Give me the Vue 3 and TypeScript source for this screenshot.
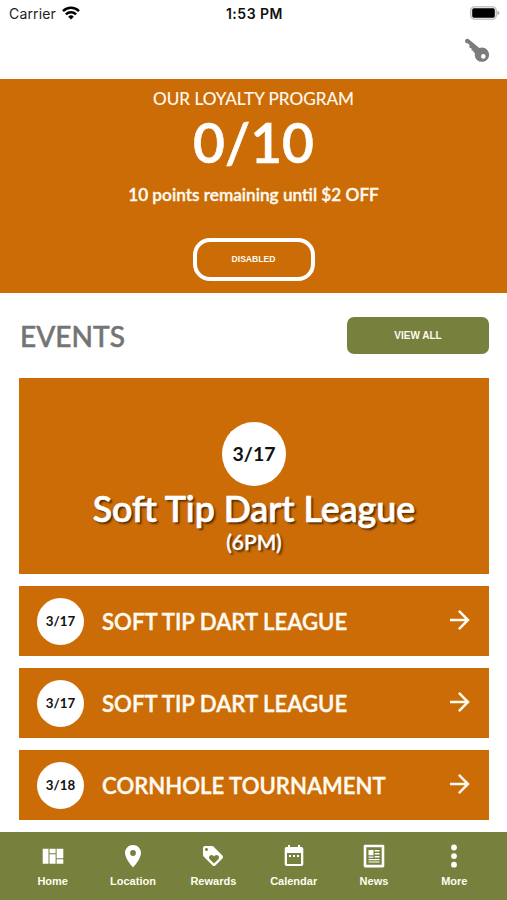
<script setup lang="ts">
interface EventItem {
  date: string
  title: string
}

interface Tab {
  label: string
  icon: string
}

const events: EventItem[] = [
  { date: '3/17', title: 'SOFT TIP DART LEAGUE' },
  { date: '3/17', title: 'SOFT TIP DART LEAGUE' },
  { date: '3/18', title: 'CORNHOLE TOURNAMENT' },
]

const tabs: Tab[] = [
  { label: 'Home', icon: 'M1.7 4.7h5.8v15H1.7zM8.5 4.7h6.1v4.6H8.5zM8.5 10.3h6.1v9.4H8.5zM15.6 4.7h6.7v9.6h-6.7zM15.6 15.3h6.7v4.4h-6.7z' },
  { label: 'Location', icon: 'M12 1C7.6 1 4 4.5 4 9c0 6 8 14.4 8 14.4s8-8.4 8-14.4c0-4.5-3.6-8-8-8zm0 10.9a2.9 2.9 0 0 1 0-5.8 2.9 2.9 0 0 1 0 5.8z' },
  { label: 'Rewards', icon: 'M21.41 11.58l-9-9C12.05 2.22 11.55 2 11 2H4c-1.1 0-2 .9-2 2v7c0 .55.22 1.05.59 1.42l9 9c.36.36.86.58 1.41.58.55 0 1.05-.22 1.41-.59l7-7c.37-.36.59-.86.59-1.41 0-.55-.23-1.06-.59-1.42zM5.5 7C4.67 7 4 6.33 4 5.5S4.67 4 5.5 4 7 4.67 7 5.5 6.33 7 5.5 7zm11.77 8.27L13 19.54l-4.27-4.27C8.28 14.81 8 14.19 8 13.5c0-1.38 1.12-2.5 2.5-2.5.69 0 1.32.28 1.77.74l.73.72.73-.73c.45-.45 1.08-.73 1.77-.73 1.38 0 2.5 1.12 2.5 2.5 0 .69-.28 1.32-.73 1.77z' },
  { label: 'Calendar', icon: 'M9 11H7v2h2v-2zm4 0h-2v2h2v-2zm4 0h-2v2h2v-2zm2.5-8H18V1h-2v2H8V1H6v2H4.5c-1.1 0-1.8.9-1.8 2v15c0 1.1.8 2 1.8 2h15c1 0 1.8-.9 1.8-2V5c0-1.1-.8-2-1.8-2zm-.5 17H5V9h14v11z' },
  { label: 'News', icon: 'M3.1.7h17.8a1.4 1.4 0 0 1 1.4 1.4V22a1.4 1.4 0 0 1-1.4 1.4H3.1A1.4 1.4 0 0 1 1.7 22V2.1A1.4 1.4 0 0 1 3.1.7zM4.3 3.3v17.5h15.4V3.3zM6.5 6h5v5.2h-5zM12.7 6h4.8v1.5h-4.8zM12.7 9h4.8v1.5h-4.8zM6.5 12.5h5v1.3h-5zM12.7 12h4.8v1.5h-4.8zM6.5 15h11v1.2h-11zM6.5 17.4h11v1.2h-11z' },
  { label: 'More', icon: 'M12 .6a2.9 2.9 0 1 1 0 5.8 2.9 2.9 0 0 1 0-5.8zm0 8.6a2.9 2.9 0 1 1 0 5.8 2.9 2.9 0 0 1 0-5.8zm0 8.6a2.9 2.9 0 1 1 0 5.8 2.9 2.9 0 0 1 0-5.8z' },
]
</script>

<template>
  <div class="screen">
    <header class="status">
      <div class="carrier">
        <span>Carrier</span>
        <svg class="wifi" viewBox="0 0 18 14" fill="none" stroke="#000" stroke-width="2.5">
          <path d="M1 5.1a11.5 11.5 0 0 1 16 0M3.9 8.3a7.3 7.3 0 0 1 10.2 0" />
          <path d="M9 13.5L6.2 10.7a4 4 0 0 1 5.6 0z" fill="#000" stroke="none" />
        </svg>
      </div>
      <strong class="clock">1:53 PM</strong>
      <svg class="battery" viewBox="0 0 30 14">
        <rect x=".7" y=".7" width="25.6" height="12.6" rx="3.7" fill="#eee" stroke="#b5b5b5" stroke-width="1.1" />
        <rect x="2.2" y="2.2" width="22.6" height="9.6" rx="1.7" />
        <path d="M27.4 4.8c2.7.9 2.7 3.5 0 4.4z" fill="#aaa" />
      </svg>
    </header>
    <div class="toolbar">
      <svg class="key" viewBox="0 0 26 26">
        <path fill-rule="evenodd" fill="#7c7c7c" d="M1 2.6C1.3 1 3.4.2 4.7 1.3L15.4 9.9A7.2 7.2 0 1 1 10.7 16.9L11 14.9 9.6 14.6 9.3 12.7 7.6 12.4 7.5 10.3 5.5 9.7 5.4 6.8 3.4 5.3 1.5 4.9zM19.3 16.1a2.3 2.3 0 1 0 0 4.6 2.3 2.3 0 0 0 0-4.6z" />
      </svg>
    </div>

    <section class="loyalty">
      <div class="program">OUR LOYALTY PROGRAM</div>
      <div class="score">0/10</div>
      <div class="remaining">10 points remaining until $2 OFF</div>
      <button class="disabled">DISABLED</button>
    </section>

    <main class="events">
      <div class="heading">
        <h2>EVENTS</h2>
        <button class="view-all">VIEW ALL</button>
      </div>
      <article class="feature">
        <div class="badge large">3/17</div>
        <h1>Soft Tip Dart League</h1>
        <div class="time">(6PM)</div>
      </article>
      <article v-for="(event, i) in events" :key="i" class="row">
        <div class="badge">{{ event.date }}</div>
        <div class="title">{{ event.title }}</div>
        <svg class="arrow" viewBox="0 0 20 20" fill="none" stroke="#fffaf0" stroke-width="2.5">
          <path d="M0 10h18M8.9 .9L18 10l-9.1 9.1" />
        </svg>
      </article>
    </main>

    <nav class="tabs">
      <div v-for="tab in tabs" :key="tab.label" class="tab">
        <svg viewBox="0 0 24 24"><path :d="tab.icon" fill="#fff" fill-rule="evenodd" /></svg>
        <span>{{ tab.label }}</span>
      </div>
    </nav>
  </div>
</template>

<style>
body { margin: 0; background: #fff; }
</style>

<style scoped>
* { box-sizing: border-box; }
.screen { width: 507px; height: 900px; display: flex; flex-direction: column; overflow: hidden; background: #fff; font-family: Lato, sans-serif; }
button { font-family: "Liberation Sans", Arial, sans-serif; font-weight: 700; color: #fffaf0; padding: 0; }
.status { height: 28px; flex: none; display: grid; grid-template-columns: 1fr auto 1fr; align-items: center; padding: 0 7px 2px 9px; font-family: Inter, sans-serif; font-size: 14px; color: #222; }
.carrier { display: flex; align-items: center; gap: 6px; letter-spacing: .15px; }
.wifi { width: 18px; height: 14px; margin-top: -1px; }
.clock { font-weight: 600; letter-spacing: .5px; color: #111; }
.battery { width: 30px; height: 14px; justify-self: end; }
.toolbar { height: 51px; flex: none; display: flex; justify-content: flex-end; padding: 10px 17px 0 0; }
.key { width: 26px; height: 26px; }
.loyalty { height: 214px; flex: none; display: flex; flex-direction: column; align-items: center; background: #cb6c07; color: #fffaf0; }
.program { margin-top: 9px; font-size: 17.15px; line-height: 22px; -webkit-text-stroke: .15px currentColor; }
.score { font-size: 55px; line-height: 66px; margin-top: -1px; font-weight: 600; color: #fff; -webkit-text-stroke: .6px currentColor; }
.remaining { margin-top: 7px; font-size: 17.2px; line-height: 26px; font-weight: 600; -webkit-text-stroke: .35px currentColor; }
.disabled { width: 122px; height: 43px; margin-top: 30px; border: 4px solid #fff; border-radius: 17px; background: transparent; font-size: 8.6px; padding-bottom: 2px; }
.events { flex: 1; display: flex; flex-direction: column; gap: 12px; padding: 24px 18px 0 19px; }
.heading { height: 49px; display: flex; justify-content: space-between; align-items: flex-start; }
h2 { margin: -1px 0 0; padding-left: 1px; font-size: 28.1px; line-height: 40px; font-weight: 500; color: #747474; -webkit-text-stroke: .5px currentColor; }
.view-all { width: 142px; height: 37px; border: 0; border-radius: 7px; background: #77803c; font-size: 10px; }
.feature { height: 196px; display: flex; flex-direction: column; align-items: center; padding-top: 44px; background: #cb6c07; color: #fff; text-shadow: 2px 2px 2px #0009; }
.badge { width: 47px; height: 47px; border-radius: 50%; display: flex; align-items: center; justify-content: center; flex: none; background: #fff; color: #111; font-size: 13.3px; font-weight: 700; text-shadow: none; padding-bottom: 1px; }
.badge.large { width: 64px; height: 64px; font-size: 19.5px; }
h1 { margin: 1px 0 0; font-size: 35.7px; line-height: 43px; font-weight: 600; -webkit-text-stroke: .6px currentColor; }
.time { margin-top: -1px; font-size: 20.8px; line-height: 25px; font-weight: 600; -webkit-text-stroke: .3px currentColor; }
.row { height: 70px; display: flex; align-items: center; padding: 0 19px 0 18px; background: #cb6c07; color: #fffaf0; }
.title { margin-left: 18px; flex: 1; padding-top: 2px; font-size: 22.15px; font-weight: 600; line-height: 30px; -webkit-text-stroke: .4px currentColor; }
.arrow { width: 20px; height: 20px; margin-top: -3px; }
.tabs { height: 68px; flex: none; display: grid; grid-template-columns: repeat(6, 1fr); padding: 0 12.5px; background: #77803c; color: #fffdf0; font: 700 11px "Liberation Sans", Arial, sans-serif; }
.tab { display: flex; flex-direction: column; align-items: center; padding-top: 12px; }
.tab svg { width: 24px; height: 24px; }
.tab span { margin-top: 6px; line-height: 14px; }
</style>
